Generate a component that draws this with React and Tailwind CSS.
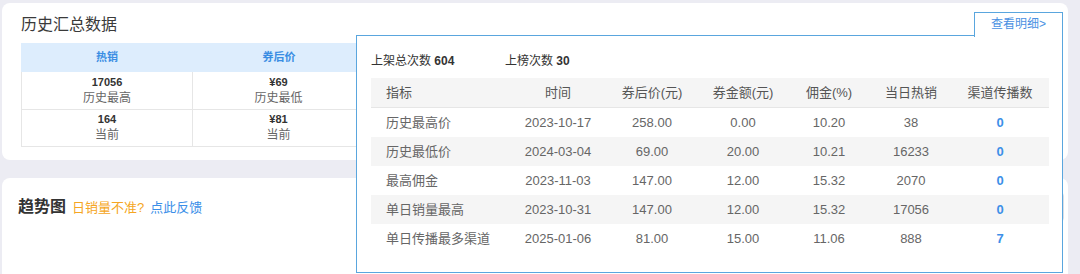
import React from "react";

const font = { fontFamily: '"Liberation Sans", "Noto Sans CJK SC", sans-serif' };

const summaryCols = [
  { h: "热销", a: ["17056", "历史最高"], b: ["164", "当前"] },
  { h: "券后价", a: ["¥69", "历史最低"], b: ["¥81", "当前"] },
  { h: "", a: ["", ""], b: ["", ""] },
  { h: "", a: ["", ""], b: ["", ""] },
  { h: "", a: ["", ""], b: ["", ""] },
  { h: "", a: ["", ""], b: ["", ""] },
];

const rows = [
  ["历史最高价", "2023-10-17", "258.00", "0.00", "10.20", "38", "0"],
  ["历史最低价", "2024-03-04", "69.00", "20.00", "10.21", "16233", "0"],
  ["最高佣金", "2023-11-03", "147.00", "12.00", "15.32", "2070", "0"],
  ["单日销量最高", "2023-10-31", "147.00", "12.00", "15.32", "17056", "0"],
  ["单日传播最多渠道", "2025-01-06", "81.00", "15.00", "11.06", "888", "7"],
];

const heads = ["指标", "时间", "券后价(元)", "券金额(元)", "佣金(%)", "当日热销", "渠道传播数"];
const widths = ["w-[140px]", "w-[94px]", "w-[94px]", "w-[88px]", "w-[84px]", "w-[80px]", "w-[98px]"];

export default function App() {
  return (
    <div style={font} className="relative w-[1080px] h-[274px] overflow-hidden bg-[#ececf3] pt-[3px] pl-[2px]">
      {/* Card 1 */}
      <div className="w-[1066px] h-[157px] bg-white rounded-[8px] pt-[10px] pl-[19px]">
        <div className="h-[24px] leading-[24px] text-[16px] text-[#3a3a3a]">历史汇总数据</div>
        <div className="mt-[6px] flex">
          {summaryCols.map((c, i) => (
            <div key={i} className="w-[172px] flex flex-col">
              <div className="h-[29px] bg-[#ddedfd] flex items-center justify-center text-[11px] font-bold text-[#3a8de3]">
                {c.h}
              </div>
              <div className={`h-[38px] flex flex-col items-center justify-center border-b border-r border-[#e6e6e6] ${i === 0 ? "border-l" : ""}`}>
                <div className="text-[11px] font-bold text-[#333] leading-[15px]">{c.a[0]}</div>
                <div className="text-[12px] text-[#666] leading-[17px]">{c.a[1]}</div>
              </div>
              <div className={`h-[37px] flex flex-col items-center justify-center border-b border-r border-[#e6e6e6] ${i === 0 ? "border-l" : ""}`}>
                <div className="text-[11px] font-bold text-[#333] leading-[15px]">{c.b[0]}</div>
                <div className="text-[12px] text-[#666] leading-[17px]">{c.b[1]}</div>
              </div>
            </div>
          ))}
        </div>
      </div>

      {/* Card 2 */}
      <div className="mt-[18px] w-[1066px] h-[120px] bg-white rounded-[8px] pl-[16px] pr-[4px] pt-[14px]">
        <div className="flex items-center justify-between h-[30px]">
          <div className="flex items-baseline gap-[6px]">
            <span className="text-[16px] font-bold text-[#333]">趋势图</span>
            <span className="text-[13px] text-[#f5a623]">日销量不准?</span>
            <span className="text-[13px] text-[#3b8fe8]">点此反馈</span>
          </div>
          <div className="w-[90px] h-[30px] border border-[#dcdfe6] rounded-[4px]" />
        </div>
      </div>

      {/* Tab */}
      <div className="absolute left-[974px] top-[12px] w-[89px] h-[25px] z-20 bg-white border border-b-0 border-[#5aa6de] flex justify-center pt-[3px] text-[12px] leading-[16px] text-[#4a90e2]">
        查看明细&gt;
      </div>

      {/* Popup */}
      <div className="absolute left-[356px] top-[35px] w-[707px] h-[238px] z-10 bg-white border border-[#5aa6de] pl-[14px] pt-[16px]">
        <div className="flex h-[18px] items-center text-[12px] text-[#333]">
          <span className="w-[134px]">
            上架总次数 <span className="font-bold">604</span>
          </span>
          <span>
            上榜次数 <span className="font-bold">30</span>
          </span>
        </div>
        <div className="mt-[8px] w-[678px]">
          <div className="flex h-[30px] items-center bg-[#f5f5f5] border-b border-[#e6e6e6] text-[13px] text-[#555]">
            {heads.map((h, i) => (
              <div key={i} className={`${widths[i]} ${i === 0 ? "pl-[15px] text-left" : "text-center"}`}>
                {h}
              </div>
            ))}
          </div>
          {rows.map((r, ri) => (
            <div
              key={ri}
              className={`flex h-[29px] items-center text-[13px] text-[#666] ${ri % 2 === 1 ? "bg-[#f5f5f5]" : "bg-white"}`}
            >
              {r.map((v, i) => (
                <div
                  key={i}
                  className={`${widths[i]} ${i === 0 ? "pl-[15px] text-left" : "text-center"} ${i === 6 ? "text-[#3d8fe8] font-bold" : ""}`}
                >
                  {v}
                </div>
              ))}
            </div>
          ))}
        </div>
      </div>
    </div>
  );
}
